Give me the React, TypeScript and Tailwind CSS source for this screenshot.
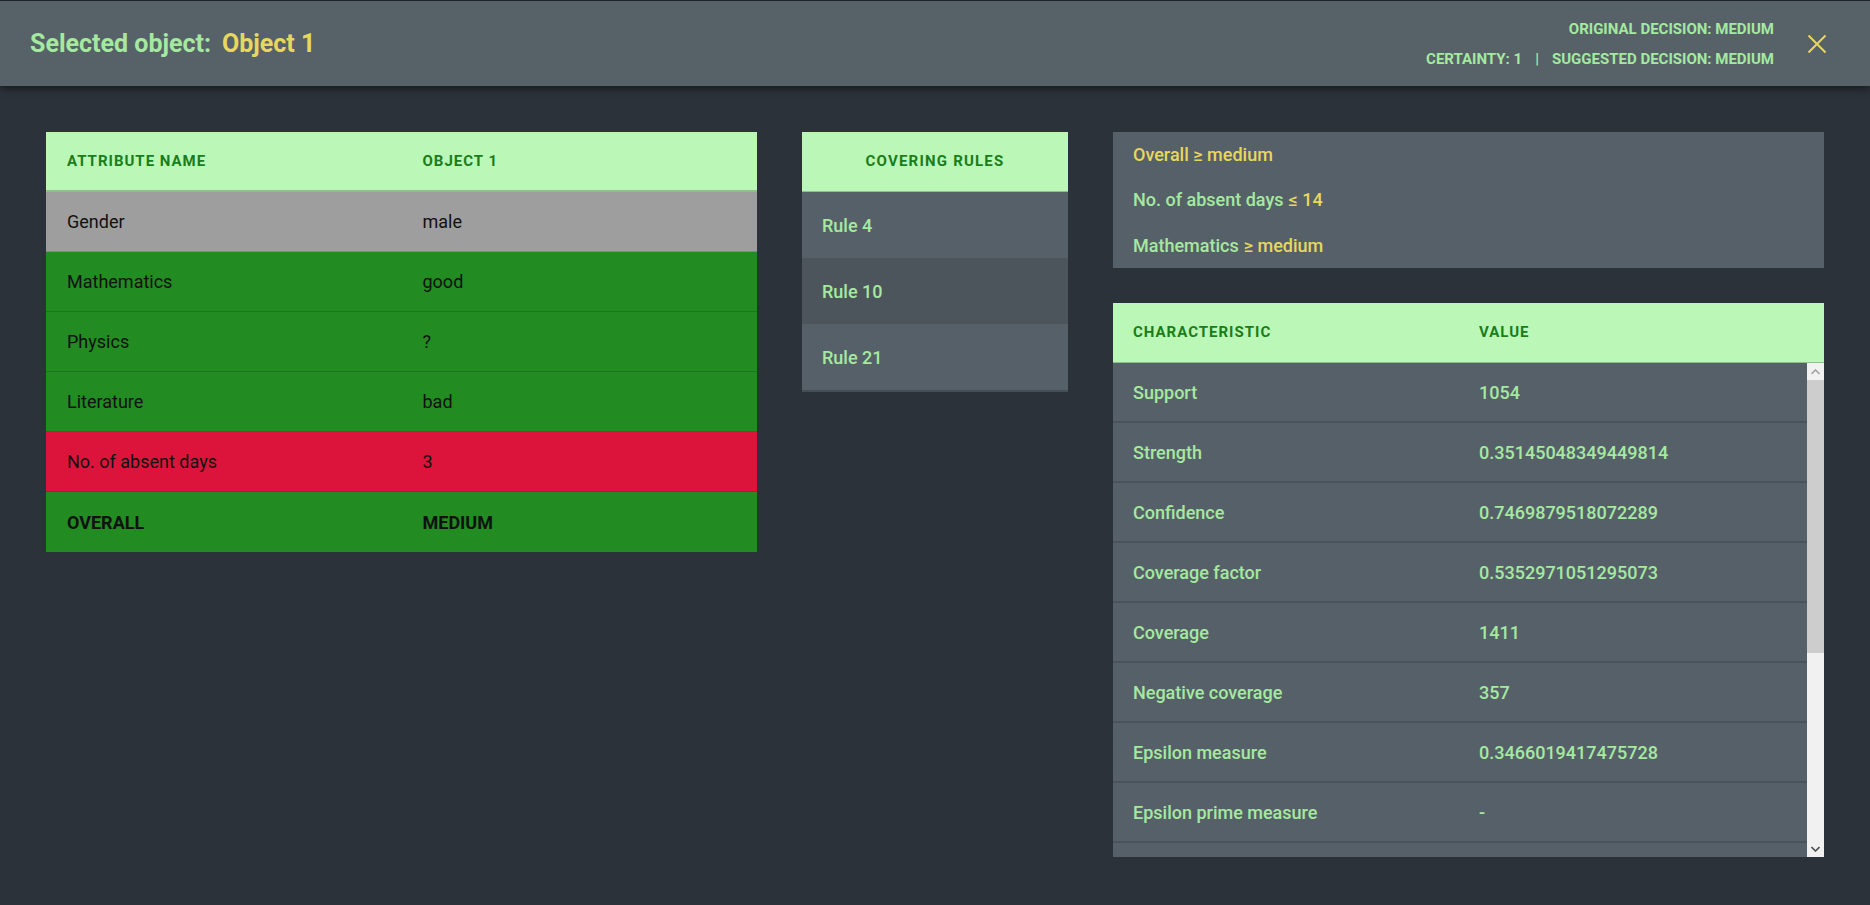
import React from "react";

const attributes = [
  { name: "Gender", value: "male", tone: "bg-[#9e9e9e]" },
  { name: "Mathematics", value: "good", tone: "bg-[#228b22]" },
  { name: "Physics", value: "?", tone: "bg-[#228b22]" },
  { name: "Literature", value: "bad", tone: "bg-[#228b22]" },
  { name: "No. of absent days", value: "3", tone: "bg-[#dc143c]" },
];

const rules = ["Rule 4", "Rule 10", "Rule 21"];

const characteristics = [
  ["Support", "1054"],
  ["Strength", "0.35145048349449814"],
  ["Confidence", "0.7469879518072289"],
  ["Coverage factor", "0.5352971051295073"],
  ["Coverage", "1411"],
  ["Negative coverage", "357"],
  ["Epsilon measure", "0.3466019417475728"],
  ["Epsilon prime measure", "-"],
  ["Bayesian confirmation measure", "-"],
  ["f confirmation measure", "0.1623"],
  ["A confirmation measure", "0.2117"],
  ["Z confirmation measure", "0.4102"],
  ["l confirmation measure", "0.3389"],
  ["c1 confirmation measure", "0.2841"],
  ["s confirmation measure", "0.2215"],
];

const CloseIcon = () => (
  <svg width="20" height="20" viewBox="0 0 20 20" fill="none">
    <path d="M1.5 1.5 L18.5 18.5 M18.5 1.5 L1.5 18.5" stroke="#e8d75e" strokeWidth="2" />
  </svg>
);

const Chevron = ({ up, color }: { up?: boolean; color: string }) => (
  <svg width="9" height="6" viewBox="0 0 9 6">
    <path d={up ? "M0.5 5 L4.5 1 L8.5 5" : "M0.5 1 L4.5 5 L8.5 1"} stroke={color} strokeWidth="1.6" fill="none" />
  </svg>
);

export default function App() {
  return (
    <div className="min-h-screen bg-[#2b3239] font-['Roboto','Liberation_Sans',sans-serif]">
      <header className="relative z-10 h-[86px] bg-[#566168] border-t border-[#1f2429] flex items-center justify-between pl-[30px] pr-[43px] shadow-[0_3px_8px_rgba(0,0,0,0.45)]">
        <div className="text-[25px] font-bold flex items-center">
          <span className="text-[#a5e9a0]">Selected object:</span>
          <span className="ml-[11px] text-[#e8d75e]">Object 1</span>
        </div>
        <div className="flex items-center">
          <div className="flex flex-col items-end text-[15px] font-bold text-[#a5e9a0] leading-[18px] gap-[12px]">
            <div>ORIGINAL DECISION: MEDIUM</div>
            <div className="flex items-center">
              <span>CERTAINTY: 1</span>
              <span className="mx-[13px]">|</span>
              <span>SUGGESTED DECISION: MEDIUM</span>
            </div>
          </div>
          <div className="ml-[33px] flex items-center">
            <CloseIcon />
          </div>
        </div>
      </header>

      <main className="flex items-start gap-[45px] px-[46px] pt-[46px]">
        {/* attribute table */}
        <div className="w-[711px]">
          <div className="h-[60px] bg-[#bbf8b8] flex items-center text-[15px] font-bold tracking-[1px] text-[#1a7d1a] border-b-2 border-[#8fc08c]">
            <div className="w-1/2 pl-[21px]">ATTRIBUTE NAME</div>
            <div className="w-1/2 pl-[21px]">OBJECT 1</div>
          </div>
          {attributes.map((a) => (
            <div
              key={a.name}
              className={`h-[60px] flex items-center text-[18px] text-[#111] border-b border-black/15 ${a.tone}`}
            >
              <div className="w-1/2 pl-[21px]">{a.name}</div>
              <div className="w-1/2 pl-[21px]">{a.value}</div>
            </div>
          ))}
          <div className="h-[60px] flex items-center text-[18px] font-bold text-[#111] bg-[#228b22]">
            <div className="w-1/2 pl-[21px]">OVERALL</div>
            <div className="w-1/2 pl-[21px]">MEDIUM</div>
          </div>
        </div>

        {/* covering rules */}
        <div className="w-[266px] border-b-2 border-[#464e55]">
          <div className="h-[60px] bg-[#bbf8b8] flex items-center justify-center text-[15px] font-bold tracking-[1.2px] text-[#1a7d1a] border-b border-[#8fc08c]">
            COVERING RULES
          </div>
          {rules.map((r, i) => (
            <div
              key={r}
              className={`h-[66px] flex items-center pl-[20px] text-[18px] font-medium text-[#a5e9a0] ${
                i === 1 ? "bg-[#4c555c]" : "bg-[#566068]"
              }`}
            >
              {r}
            </div>
          ))}
        </div>

        {/* rule + characteristics */}
        <div className="w-[711px] flex flex-col gap-[35px]">
          <div className="bg-[#566068] pl-[20px] text-[18px] font-medium">
            <div className="h-[45px] flex items-center text-[#e8d75e]">Overall ≥ medium</div>
            <div className="h-[45px] flex items-center text-[#a5e9a0]">
              No. of absent days <span className="ml-[5px] text-[#e8d75e]">≤ 14</span>
            </div>
            <div className="h-[46px] flex items-center text-[#a5e9a0]">
              Mathematics <span className="ml-[5px] text-[#e8d75e]">≥ medium</span>
            </div>
          </div>

          <div>
            <div className="h-[60px] bg-[#bbf8b8] flex items-center text-[15px] font-bold tracking-[1px] text-[#1a7d1a] border-b border-[#8fc08c]">
              <div className="w-[346px] pl-[20px]">CHARACTERISTIC</div>
              <div className="pl-[20px]">VALUE</div>
            </div>
            <div className="h-[494px] flex overflow-hidden bg-[#566068]">
              <div className="flex-1">
                {characteristics.map(([k, v]) => (
                  <div
                    key={k}
                    className="h-[60px] flex items-center text-[18px] font-medium text-[#a5e9a0] border-b-2 border-[#4a5359]"
                  >
                    <div className="w-[346px] pl-[20px]">{k}</div>
                    <div className="pl-[20px]">{v}</div>
                  </div>
                ))}
              </div>
              <div className="w-[17px] bg-[#f1f1f1] flex flex-col">
                <div className="h-[17px] flex items-center justify-center">
                  <Chevron up color="#a3a3a3" />
                </div>
                <div className="h-[273px] bg-[#cdcdcd]" />
                <div className="flex-1" />
                <div className="h-[17px] flex items-center justify-center">
                  <Chevron color="#505050" />
                </div>
              </div>
            </div>
          </div>
        </div>
      </main>
    </div>
  );
}
